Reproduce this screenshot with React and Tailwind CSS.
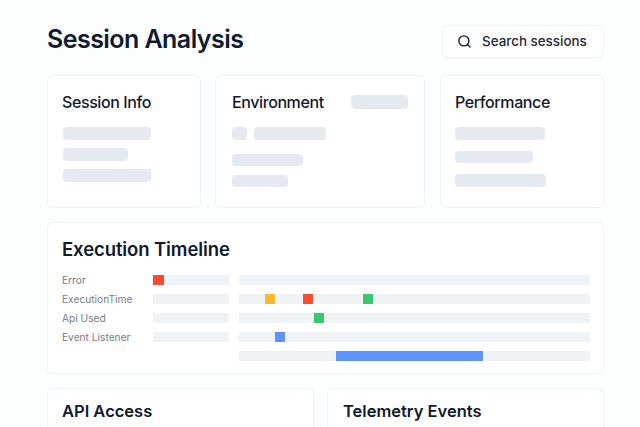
import React from "react";

function Bar({ w, h = "h-[13px]", className = "" }) {
  return <div className={`${h} ${w} rounded-[4px] bg-[#e5e9f0] ${className}`} />;
}

function Track({ children }) {
  return <div className="relative h-[10px] bg-[#f0f3f6]">{children}</div>;
}

function Marker({ left, width = "w-[10px]", color }) {
  return <div className={`absolute top-0 h-[10px] ${left} ${width} ${color}`} />;
}

function Label({ children }) {
  return <div className="h-[10px] whitespace-nowrap text-[10.2px] leading-[10px] text-[#737b88]">{children}</div>;
}

const cardBase = "rounded-[6px] border border-[#f0f3f7] bg-white";

function Rows() {
  return (
    <div className="grid grid-cols-[81px_76px_351px] gap-x-[10px] gap-y-[9px]">
      <Label>Error</Label>
      <Track><Marker left="left-0" width="w-[11px]" color="bg-[#fb4b34]" /></Track>
      <Track />
      <Label>ExecutionTime</Label>
      <Track />
      <Track>
        <Marker left="left-[26px]" color="bg-[#fdb92e]" />
        <Marker left="left-[64px]" color="bg-[#fb4b34]" />
        <Marker left="left-[124px]" color="bg-[#37c96b]" />
      </Track>
      <Label>Api Used</Label>
      <Track />
      <Track><Marker left="left-[75px]" color="bg-[#37c96b]" /></Track>
      <Label>Event Listener</Label>
      <Track />
      <Track><Marker left="left-[36px]" color="bg-[#5e93fd]" /></Track>
      <div />
      <div />
      <Track><Marker left="left-[97px]" width="w-[147px]" color="bg-[#5e93fd]" /></Track>
    </div>
  );
}

export default function App() {
  return (
    <div className="h-[427px] w-[640px] overflow-hidden bg-[#fcfdfd] pl-[47px] pr-[36px] pt-[25px] font-['Inter',sans-serif] text-[#111a2e]">
      <header className="flex h-[33px] items-start justify-between">
        <h1 className="text-[25px] font-semibold leading-[29px] tracking-[-0.55px]">Session Analysis</h1>
        <div className="flex h-[33px] w-[162px] items-center rounded-[6px] border border-[#f0f3f7] bg-white pl-[14px]">
          <svg width="15" height="15" viewBox="0 0 24 24" fill="none" stroke="#111a2e" strokeWidth="2.2" strokeLinecap="round" strokeLinejoin="round">
            <circle cx="11" cy="11" r="8" />
            <path d="m21 21-4.3-4.3" />
          </svg>
          <span className="ml-[10px] text-[13.4px] font-medium text-[#1f2937]">Search sessions</span>
        </div>
      </header>

      <section className="mt-[17px] grid h-[133px] grid-cols-[154px_210px_165px] gap-x-[14px]">
        <div className={`${cardBase} px-[14px] pt-[16px]`}>
          <h2 className="text-[16px] font-medium leading-[20px] tracking-[-0.4px]">Session Info</h2>
          <div className="mt-[15px] flex flex-col gap-[8px]">
            <Bar w="w-[88px]" className="ml-[1px]" />
            <Bar w="w-[65px]" className="ml-[1px]" />
            <Bar w="w-[88px]" className="ml-[1px]" />
          </div>
        </div>
        <div className={`${cardBase} px-[16px] pt-[16px]`}>
          <div className="flex items-center justify-between">
            <h2 className="text-[16px] font-medium leading-[20px] tracking-[-0.4px]">Environment</h2>
            <Bar w="w-[57px]" h="h-[14px]" />
          </div>
          <div className="mt-[15px] flex gap-[7px]">
            <Bar w="w-[15px]" />
            <Bar w="w-[72px]" />
          </div>
          <div className="mt-[14px] flex flex-col gap-[9px]">
            <Bar w="w-[71px]" h="h-[12px]" />
            <Bar w="w-[56px]" h="h-[12px]" />
          </div>
        </div>
        <div className={`${cardBase} ml-[1px] px-[14px] pt-[16px]`}>
          <h2 className="text-[16px] font-medium leading-[20px] tracking-[-0.4px]">Performance</h2>
          <div className="mt-[15px] flex flex-col gap-[11px]">
            <Bar w="w-[90px]" />
            <Bar w="w-[78px]" h="h-[12px]" />
            <Bar w="w-[91px]" />
          </div>
        </div>
      </section>

      <section className={`${cardBase} mt-[14px] h-[152px] px-[14px] pt-[14px]`}>
        <h2 className="text-[18.5px] font-semibold leading-[24px] tracking-[-0.1px]">Execution Timeline</h2>
        <div className="mt-[14px]"><Rows /></div>
      </section>

      <section className="mt-[14px] grid grid-cols-[267px_277px] gap-x-[13px]">
        <div className={`${cardBase} h-[60px] px-[14px] pt-[11px]`}>
          <h2 className="text-[16.5px] font-semibold leading-[22px]">API Access</h2>
        </div>
        <div className={`${cardBase} h-[60px] px-[15px] pt-[11px]`}>
          <h2 className="text-[16.5px] font-semibold leading-[22px]">Telemetry Events</h2>
        </div>
      </section>
    </div>
  );
}
